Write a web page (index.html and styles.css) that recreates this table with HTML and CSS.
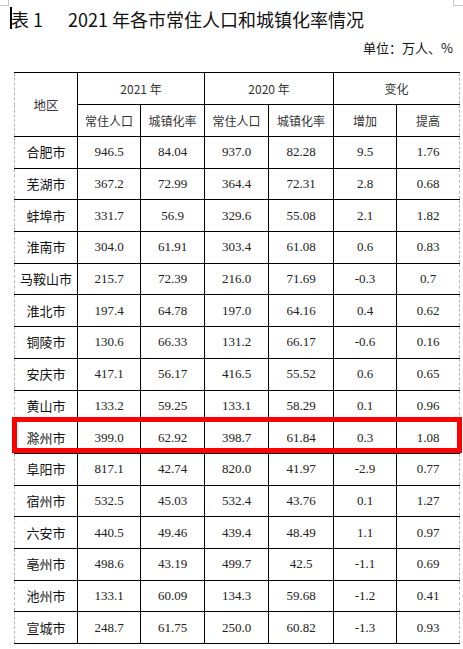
FILE: index.html
```html
<!DOCTYPE html>
<html lang="zh-CN">
<head>
<meta charset="utf-8">
<title>表1 2021年各市常住人口和城镇化率情况</title>
<link rel="stylesheet" href="styles.css">
</head>
<body>
<div class="page">
  <h1 class="title"><span class="caret"></span><span class="label">表 1</span><span>2021 年各市常住人口和城镇化率情况</span></h1>
  <p class="unit">单位：万人、%</p>
  <div class="table-wrap">
    <table class="data">
      <colgroup>
        <col class="c1"><col class="c2"><col class="c3"><col class="c4"><col class="c5"><col class="c6"><col class="c7">
      </colgroup>
      <thead>
        <tr class="h1">
          <th rowspan="2" class="region">地区</th>
          <th colspan="2">2021 年</th>
          <th colspan="2">2020 年</th>
          <th colspan="2">变化</th>
        </tr>
        <tr class="h2">
          <th>常住人口</th><th>城镇化率</th><th>常住人口</th><th>城镇化率</th><th>增加</th><th>提高</th>
        </tr>
      </thead>
      <tbody>
        <tr><td>合肥市</td><td>946.5</td><td>84.04</td><td>937.0</td><td>82.28</td><td>9.5</td><td>1.76</td></tr>
        <tr><td>芜湖市</td><td>367.2</td><td>72.99</td><td>364.4</td><td>72.31</td><td>2.8</td><td>0.68</td></tr>
        <tr><td>蚌埠市</td><td>331.7</td><td>56.9</td><td>329.6</td><td>55.08</td><td>2.1</td><td>1.82</td></tr>
        <tr><td>淮南市</td><td>304.0</td><td>61.91</td><td>303.4</td><td>61.08</td><td>0.6</td><td>0.83</td></tr>
        <tr><td>马鞍山市</td><td>215.7</td><td>72.39</td><td>216.0</td><td>71.69</td><td>-0.3</td><td>0.7</td></tr>
        <tr><td>淮北市</td><td>197.4</td><td>64.78</td><td>197.0</td><td>64.16</td><td>0.4</td><td>0.62</td></tr>
        <tr><td>铜陵市</td><td>130.6</td><td>66.33</td><td>131.2</td><td>66.17</td><td>-0.6</td><td>0.16</td></tr>
        <tr><td>安庆市</td><td>417.1</td><td>56.17</td><td>416.5</td><td>55.52</td><td>0.6</td><td>0.65</td></tr>
        <tr><td>黄山市</td><td>133.2</td><td>59.25</td><td>133.1</td><td>58.29</td><td>0.1</td><td>0.96</td></tr>
        <tr><td>滁州市</td><td>399.0</td><td>62.92</td><td>398.7</td><td>61.84</td><td>0.3</td><td>1.08</td></tr>
        <tr><td>阜阳市</td><td>817.1</td><td>42.74</td><td>820.0</td><td>41.97</td><td>-2.9</td><td>0.77</td></tr>
        <tr><td>宿州市</td><td>532.5</td><td>45.03</td><td>532.4</td><td>43.76</td><td>0.1</td><td>1.27</td></tr>
        <tr><td>六安市</td><td>440.5</td><td>49.46</td><td>439.4</td><td>48.49</td><td>1.1</td><td>0.97</td></tr>
        <tr><td>亳州市</td><td>498.6</td><td>43.19</td><td>499.7</td><td>42.5</td><td>-1.1</td><td>0.69</td></tr>
        <tr><td>池州市</td><td>133.1</td><td>60.09</td><td>134.3</td><td>59.68</td><td>-1.2</td><td>0.41</td></tr>
        <tr><td>宣城市</td><td>248.7</td><td>61.75</td><td>250.0</td><td>60.82</td><td>-1.3</td><td>0.93</td></tr>
      </tbody>
    </table>
    <div class="highlight"></div>
  </div>
</div>
</body>
</html>
```

FILE: styles.css
```css
html, body {
  margin: 0;
  padding: 0;
  background: #ffffff;
}

.page {
  position: relative;
  width: 463px;
  height: 649px;
  overflow: hidden;
  font-family: "Noto Sans CJK SC", "Noto Sans", sans-serif;
  color: #111;
}

/* page corner marks */
.page::before,
.page::after {
  content: "";
  position: absolute;
  top: -1px;
  width: 8px;
  height: 6px;
  border-color: #c8c8c8;
  border-style: solid;
}
.page::before {
  left: 0;
  border-width: 0 1px 1px 0;
}
.page::after {
  right: 0;
  width: 9px;
  border-width: 0 0 1px 1px;
}

.title {
  position: relative;
  margin: 0;
  padding: 8px 0 0 11px;
  font-size: 18px;
  line-height: 22px;
  font-weight: 400;
  color: #111;
  white-space: nowrap;
}

.caret {
  position: absolute;
  left: 10px;
  top: 7px;
  width: 2px;
  height: 22px;
  background: #000;
}

.label {
  display: inline-block;
  width: 57px;
}

.unit {
  margin: 8px 0 0;
  padding-right: 10px;
  text-align: right;
  font-size: 13px;
  line-height: 20px;
  color: #111;
}

.table-wrap {
  position: relative;
  margin: 14px 0 0 14px;
  width: 445px;
}

.data {
  border-collapse: collapse;
  table-layout: fixed;
  width: 445px;
}

.c1 { width: 63px; }
.c2 { width: 63px; }
.c3 { width: 64px; }
.c4 { width: 64px; }
.c5 { width: 65px; }
.c6 { width: 63px; }
.c7 { width: 63px; }

.data th,
.data td {
  border: 1px solid #000;
  padding: 0;
  text-align: center;
  vertical-align: middle;
}

.data th {
  font-weight: 400;
  font-size: 12px;
  color: #333;
  height: 31px;
  line-height: 16px;
}

.data th.region {
  font-size: 12.5px;
  border-left: 1px dashed #b8b8b8;
}

.data th:last-child,
.data td:last-child {
  border-right: 1px dashed #b8b8b8;
}

.data tbody td {
  height: 30.69px;
  font-family: "Liberation Serif", "Times New Roman", serif;
  font-size: 13px;
  color: #222;
  line-height: 16px;
}

.data tbody td:first-child {
  font-family: "Noto Sans CJK SC", "Noto Sans", sans-serif;
  font-size: 13px;
  color: #111;
  border-left: 1px dashed #b8b8b8;
}

.data tbody tr:last-child td {
  border-bottom: 1px solid #000;
}

.highlight {
  position: absolute;
  left: -2px;
  top: 345px;
  width: 450px;
  height: 36px;
  box-sizing: border-box;
  border: 5px solid #ff0000;
  pointer-events: none;
}
```
